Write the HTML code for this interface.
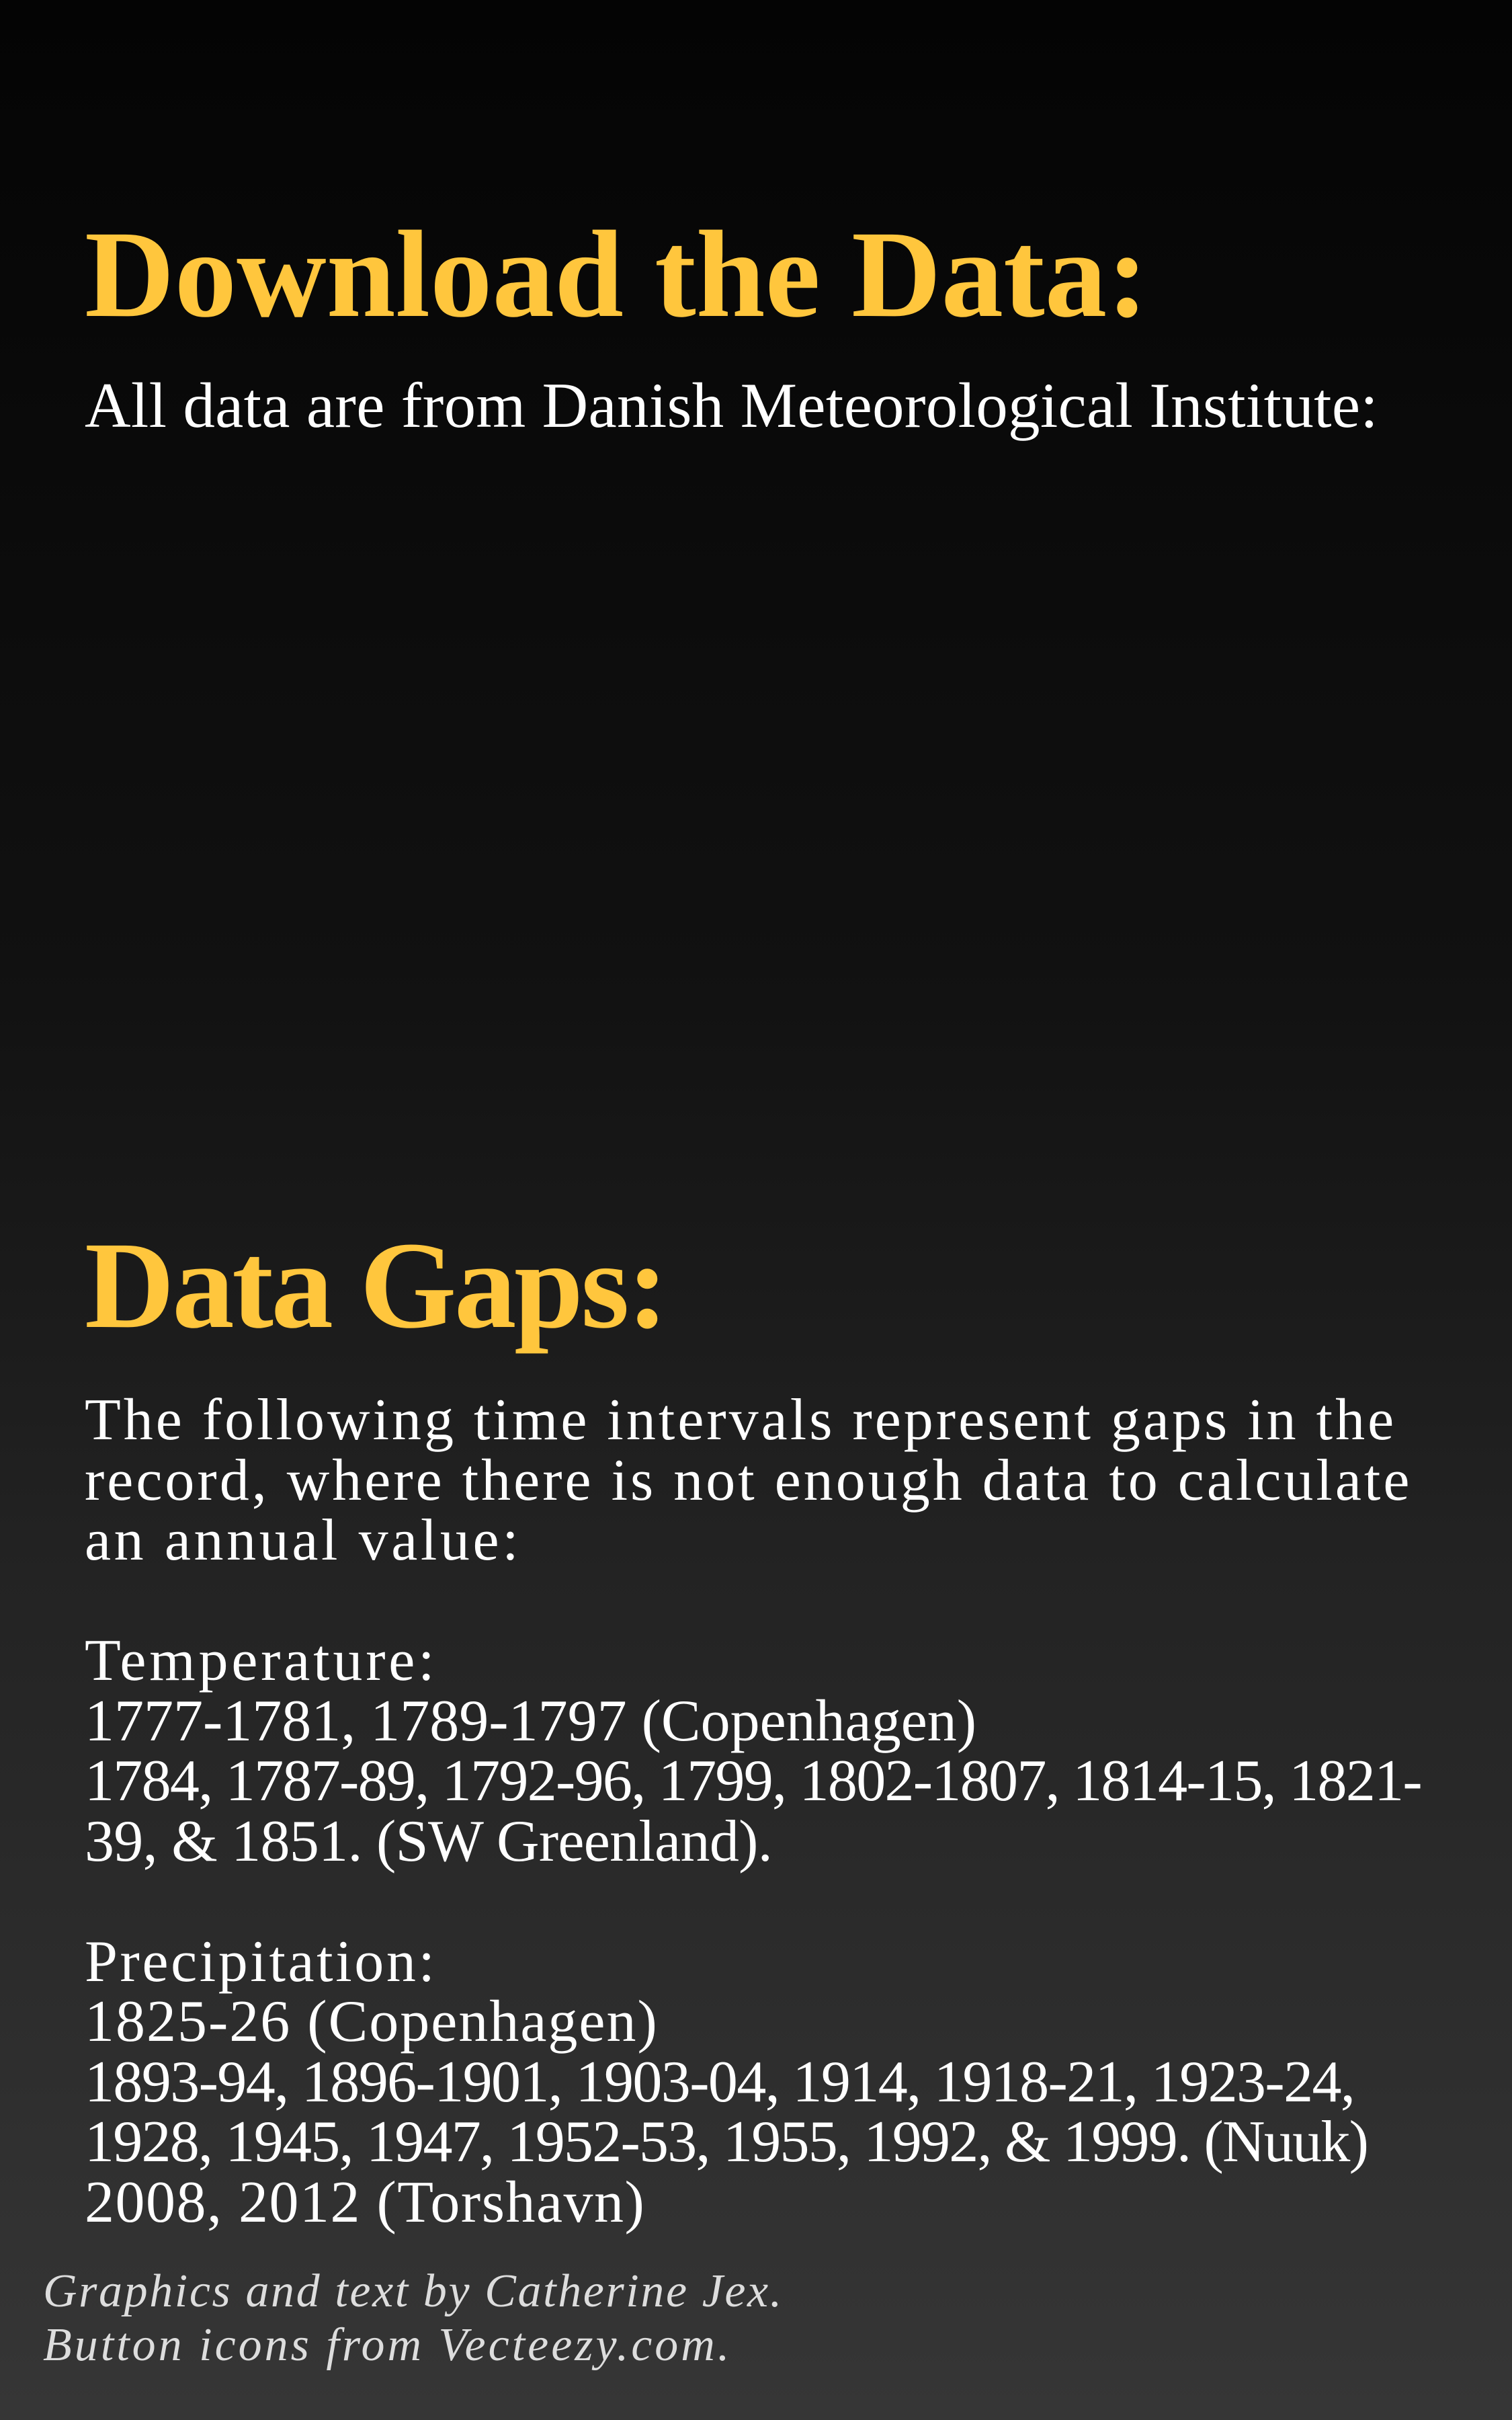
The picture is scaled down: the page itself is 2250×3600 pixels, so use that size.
<!DOCTYPE html>
<html><head><meta charset="utf-8"><style>
html,body{margin:0;padding:0}
body{width:2250px;height:3600px;position:relative;overflow:hidden;background:linear-gradient(180deg,#040404 0%,#111 40%,#232323 65%,#363636 100%);font-family:"Liberation Serif",serif;color:#fff}
.a{position:absolute;left:126px;white-space:nowrap}
h1{margin:0;font-size:185px;line-height:185px;color:#FFC63D;font-weight:bold}
.sub{font-size:95px;line-height:95px;letter-spacing:0.3px}
.p{font-size:88px;line-height:89.5px}
.p span{display:block;height:89.5px}
.f{left:64px;font-size:70px;line-height:80px;font-style:italic;color:#ddd}
.f span{display:block}
</style></head><body>
<h1 class="a" style="top:316px">Download the Data:</h1>
<div class="a sub" style="top:556px">All data are from Danish Meteorological Institute:</div>
<h1 class="a" style="top:1820px;letter-spacing:-3.4px">Data Gaps:</h1>
<div class="a p" style="top:2068px">
<span style="letter-spacing:4px">The following time intervals represent gaps in the</span>
<span style="letter-spacing:4px">record, where there is not enough data to calculate</span>
<span style="letter-spacing:4.6px">an annual value:</span>
<span></span>
<span style="letter-spacing:4.8px">Temperature:</span>
<span>1777-1781, 1789-1797 (Copenhagen)</span>
<span style="letter-spacing:-1.7px">1784, 1787-89, 1792-96, 1799, 1802-1807, 1814-15, 1821-</span>
<span style="letter-spacing:-0.7px">39, &amp; 1851. (SW Greenland).</span>
<span></span>
<span style="letter-spacing:3.6px">Precipitation:</span>
<span style="letter-spacing:2px">1825-26 (Copenhagen)</span>
<span style="letter-spacing:-1.6px">1893-94, 1896-1901, 1903-04, 1914, 1918-21, 1923-24,</span>
<span style="letter-spacing:-1.75px">1928, 1945, 1947, 1952-53, 1955, 1992, &amp; 1999. (Nuuk)</span>
<span style="letter-spacing:1.5px">2008, 2012 (Torshavn)</span>
</div>
<div class="a f" style="top:3369px"><span style="letter-spacing:2.6px">Graphics and text by Catherine Jex.</span><span style="letter-spacing:4px">Button icons from Vecteezy.com.</span></div>
</body></html>
